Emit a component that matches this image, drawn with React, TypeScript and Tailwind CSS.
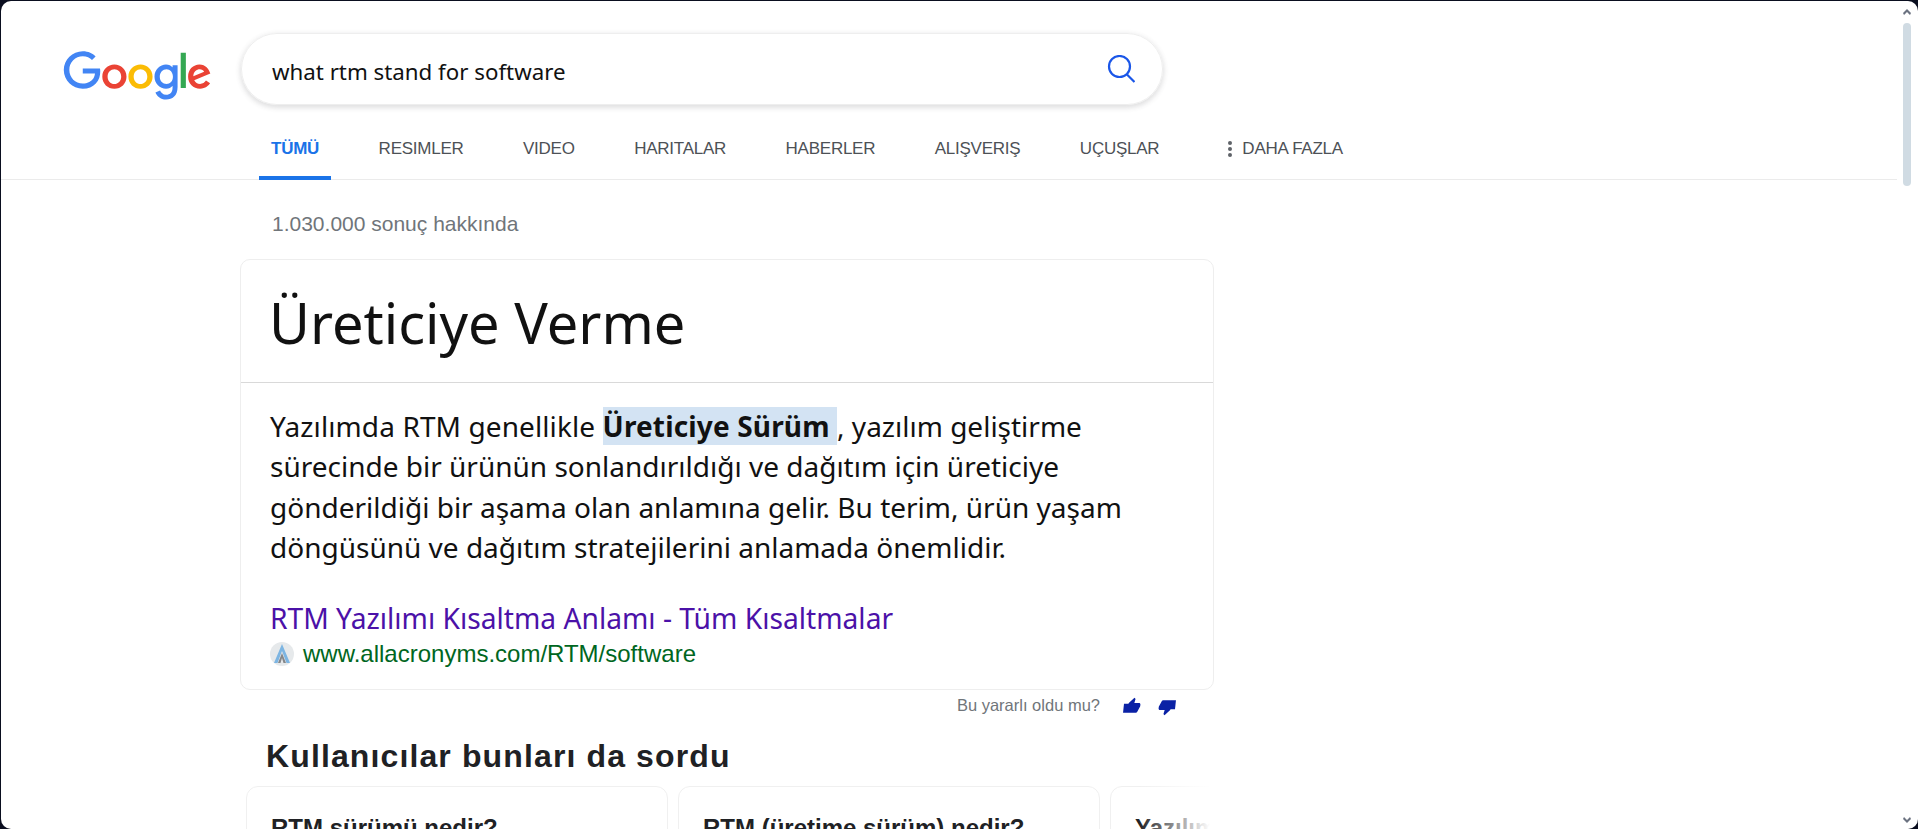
const tabs = ["RESIMLER", "VIDEO", "HARITALAR", "HABERLER", "ALIŞVERIŞ", "UÇUŞLAR"];

const GoogleLogo = () => (
    <svg viewBox="0 0 272 92" className="w-[149px] h-[50px] shrink-0">
        <path fill="#EA4335" d="M115.75 47.18c0 12.77-9.99 22.18-22.25 22.18s-22.25-9.41-22.25-22.18C71.25 34.32 81.24 25 93.5 25s22.25 9.32 22.25 22.18zm-9.74 0c0-7.98-5.79-13.44-12.51-13.44S80.99 39.2 80.99 47.18c0 7.9 5.79 13.44 12.51 13.44s12.51-5.55 12.51-13.44z" />
        <path fill="#FBBC05" d="M163.75 47.18c0 12.77-9.99 22.18-22.25 22.18s-22.25-9.41-22.25-22.18c0-12.85 9.99-22.18 22.25-22.18s22.25 9.32 22.25 22.18zm-9.74 0c0-7.98-5.79-13.44-12.51-13.44s-12.51 5.46-12.51 13.44c0 7.9 5.79 13.44 12.51 13.44s12.51-5.55 12.51-13.44z" />
        <path fill="#4285F4" d="M209.75 26.34v39.82c0 16.38-9.66 23.07-21.08 23.07-10.75 0-17.22-7.19-19.66-13.07l8.48-3.53c1.51 3.61 5.21 7.87 11.17 7.87 7.31 0 11.84-4.51 11.84-13v-3.19h-.34c-2.18 2.69-6.38 5.04-11.68 5.04-11.09 0-21.25-9.66-21.25-22.09 0-12.52 10.16-22.26 21.25-22.26 5.29 0 9.49 2.35 11.68 4.96h.34v-3.61h9.25zm-8.56 20.92c0-7.81-5.21-13.52-11.84-13.52-6.72 0-12.35 5.71-12.35 13.52 0 7.73 5.63 13.36 12.35 13.36 6.63 0 11.84-5.63 11.84-13.36z" />
        <path fill="#34A853" d="M225 3v65h-9.5V3h9.5z" />
        <path fill="#EA4335" d="M262.02 54.48l7.56 5.04c-2.44 3.61-8.32 9.83-18.48 9.83-12.6 0-22.01-9.74-22.01-22.18 0-13.19 9.49-22.18 20.92-22.18 11.51 0 17.14 9.16 18.98 14.11l1.01 2.52-29.65 12.28c2.27 4.45 5.8 6.72 10.75 6.72 4.96 0 8.4-2.44 10.92-6.14zm-23.27-7.98l19.82-8.23c-1.09-2.77-4.37-4.7-8.23-4.7-4.95 0-11.84 4.37-11.59 12.93z" />
        <path fill="#4285F4" d="M35.29 41.41V32H67c.31 1.64.47 3.58.47 5.68 0 7.06-1.93 15.79-8.15 22.01-6.05 6.3-13.78 9.66-24.02 9.66C16.32 69.35.36 53.89.36 34.91.36 15.93 16.32.47 35.3.47c10.5 0 17.98 4.12 23.6 9.49l-6.64 6.64c-4.03-3.78-9.49-6.72-16.97-6.72-13.86 0-24.7 11.17-24.7 25.03 0 13.86 10.84 25.03 24.7 25.03 8.99 0 14.11-3.61 17.39-6.89 2.66-2.66 4.41-6.46 5.1-11.65l-22.49.01z" />
    </svg>
);

const SearchIcon = () => (
    <svg viewBox="0 0 28 28" fill="none" stroke="#1a56e8" strokeWidth="2.2" className="w-7 h-7">
        <circle cx="12.5" cy="11.5" r="10.5" />
        <path d="M20 19.5l7.5 7.5" />
    </svg>
);

const Favicon = () => (
    <svg viewBox="0 0 24 24" className="w-6 h-6 shrink-0">
        <circle cx="12" cy="12" r="12" fill="#e6e9eb" />
        <path d="M12 2L4 21h3.5L12 9l4.5 12H20z" fill="#7db5e2" />
        <path d="M12 11l-4 10h2.5L12 16l1.5 5H16z" fill="#85878a" />
    </svg>
);

const PeopleCard = ({ title }: { title: string }) => (
    <div className="w-[422px] shrink-0 h-[100px] rounded-xl border border-[#f0f0f0] px-[24px] pt-[27px]">
        <p className="text-[24px] leading-[28px] font-bold text-[#202124] whitespace-nowrap">{title}</p>
    </div>
);

export default function App() {
    return (
        <div className="relative h-screen overflow-hidden bg-[#0a0e1f] pt-px pl-px font-['Liberation_Sans',sans-serif]">
            <div className="h-full rounded-[10px] bg-white overflow-hidden">
                {/* Header */}
                <div className="flex items-start pt-[32px] pl-[62px]">
                    <div className="pt-[18px]">
                        <GoogleLogo />
                    </div>
                    <div className="ml-[29px] w-[922px] h-[72px] rounded-[36px] border border-[#eeeeee] shadow-[0_2px_5px_1px_rgba(64,60,67,0.16)] flex items-center justify-between pl-[30px] pr-[27px]">
                        <span className="font-['Noto_Sans',sans-serif] text-[22.3px] text-[#111111] pt-[6px]">what rtm stand for software</span>
                        <SearchIcon />
                    </div>
                </div>

                {/* Tabs */}
                <div className="mt-[19px] h-[56px] mr-[21px] border-b border-[#ebebeb] flex items-start pl-[258px] text-[17px] text-[#4d5156] tracking-[-0.25px]">
                    <div className="h-[56px] px-3 pt-[12px] font-bold text-[#1a73e8] border-b-4 border-[#1a73e8]">TÜMÜ</div>
                    {tabs.map((tab) => (
                        <div key={tab} className="ml-[35.5px] px-3 pt-[12px]">
                            {tab}
                        </div>
                    ))}
                    <div className="ml-[36px] pl-[21px] pt-[12px] flex items-center gap-[10px]">
                        <span className="flex flex-col gap-[2px]">
                            <span className="w-[4px] h-[4px] rounded-full bg-[#5f6368]" />
                            <span className="w-[4px] h-[4px] rounded-full bg-[#5f6368]" />
                            <span className="w-[4px] h-[4px] rounded-full bg-[#5f6368]" />
                        </span>
                        <span>DAHA FAZLA</span>
                    </div>
                </div>

                <div className="ml-[239px] w-[974px]">
                    <p className="mt-[32px] pl-[32px] text-[21px] leading-[24px] text-[#70757a]">1.030.000 sonuç hakkında</p>

                    {/* Answer card */}
                    <div className="mt-[23px] h-[431px] rounded-[10px] border border-[#eeeeee] font-['Noto_Sans',sans-serif]">
                        <div className="h-[123px] border-b border-[#d9d9d9] pl-[28px] pt-[24px] text-[56px] leading-[76px] text-[#111111]">Üreticiye Verme</div>
                        <div className="pl-[29px] pt-[23px] text-[28px] leading-[40.4px] text-[#111111] whitespace-nowrap">
                            <p>
                                <span className="tracking-[0.1px]">Yazılımda RTM genellikle </span>
                                <b className="bg-[#d3e3f3] font-bold tracking-[0.15px]">Üreticiye Sürüm </b>, yazılım geliştirme
                                <br />
                                sürecinde bir ürünün sonlandırıldığı ve dağıtım için üreticiye
                                <br />
                                gönderildiği bir aşama olan anlamına gelir. Bu terim, ürün yaşam
                                <br />
                                döngüsünü ve dağıtım stratejilerini anlamada önemlidir.
                            </p>
                            <p className="mt-[32px] text-[28.2px] text-[#4b11a8] leading-[36px]">RTM Yazılımı Kısaltma Anlamı - Tüm Kısaltmalar</p>
                            <div className="flex items-center gap-[9px] mt-[2px] font-['Liberation_Sans',sans-serif] text-[24px] leading-[32px] text-[#006621]">
                                <Favicon />
                                <span>www.allacronyms.com/RTM/software</span>
                            </div>
                        </div>
                    </div>

                    {/* Feedback */}
                    <div className="flex items-center justify-end pr-[38px] mt-[5px] h-[20px]">
                        <span className="text-[16.5px] text-[#70757a]">Bu yararlı oldu mu?</span>
                        <svg viewBox="0 0 24 24" fill="#0a21a5" className="w-[18px] h-[18px] ml-[23px] mt-[2px] -skew-x-6">
                            <path d="M1 21h7V9H1v12zm22-11c0-1.1-.9-2-2-2h-6.31l.95-4.57.03-.32c0-.41-.17-.79-.44-1.06L14.17 1 7.59 7.59C7.22 7.95 7 8.45 7 9v10c0 1.1.9 2 2 2h9c.83 0 1.54-.5 1.84-1.22l3.02-7.05c.09-.23.14-.47.14-.73v-2z" />
                        </svg>
                        <svg viewBox="0 0 24 24" fill="#0a21a5" className="w-[18px] h-[18px] ml-[17px] mt-[4px] -skew-x-6">
                            <path d="M15 3H6c-.83 0-1.54.5-1.84 1.22l-3.02 7.05c-.09.23-.14.47-.14.73v2c0 1.1.9 2 2 2h6.31l-.95 4.57-.03.32c0 .41.17.79.44 1.06L9.83 23l6.59-6.59c.36-.36.58-.86.58-1.41V5c0-1.1-.9-2-2-2zm1 0v12h7V3h-7z" />
                        </svg>
                    </div>

                    {/* People also ask */}
                    <h2 className="mt-[23px] pl-[26px] text-[32px] leading-[36px] tracking-[1.12px] font-bold text-[#202124]">Kullanıcılar bunları da sordu</h2>
                    <div className="relative mt-[12px] ml-[6px] w-[964px] flex gap-[10px] overflow-hidden">
                        <PeopleCard title="RTM sürümü nedir?" />
                        <PeopleCard title="RTM (üretime sürüm) nedir?" />
                        <PeopleCard title="Yazılımda RTM nedir?" />
                        <div className="absolute right-0 top-0 bottom-0 w-[72px] bg-gradient-to-r from-transparent to-white" />
                    </div>
                </div>
            </div>

            {/* Scrollbar */}
            <div className="absolute right-[7px] top-[23px] w-2 h-[163px] rounded-full bg-[#d0dbe3]" />
            <svg viewBox="0 0 8 6" fill="#6b7280" className="absolute right-[7px] top-[9px] w-2 h-[6px]">
                <path d="M4 0l4 4-1 2-3-3-3 3-1-2z" />
            </svg>
            <svg viewBox="0 0 8 6" fill="#6b7280" className="absolute right-[7px] bottom-[6px] w-2 h-[6px]">
                <path d="M4 6l4-4-1-2-3 3-3-3-1 2z" />
            </svg>
        </div>
    );
}
